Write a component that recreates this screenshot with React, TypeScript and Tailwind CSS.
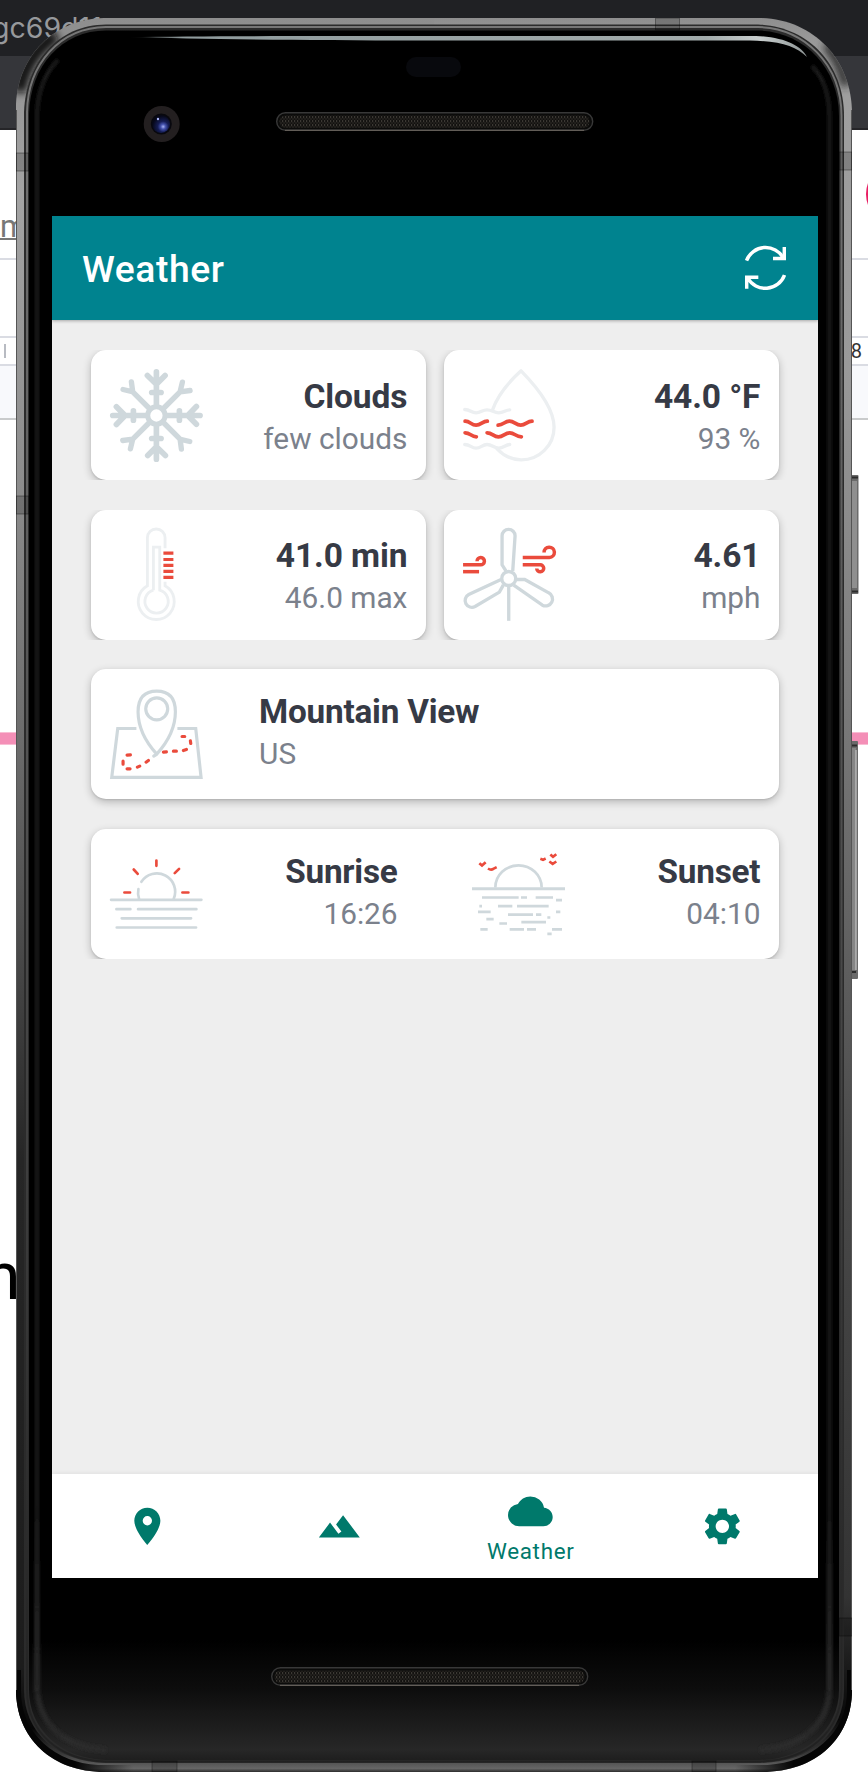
import type { ReactNode } from 'react';
import { MdCloud, MdLocationOn, MdSettings, MdTerrain } from 'react-icons/md';

const MIST = '#cfd8dc';
const PALE = '#eceff1';
const RED = '#ea4b3c';

function Glyph({ box, children }: { box: string; children: ReactNode }) {
  return (
    <svg viewBox={box} className="h-[93px] w-[93px] shrink-0 overflow-visible" fill="none">
      {children}
    </svg>
  );
}

function Snowflake() {
  return (
    <Glyph box="88.8 85.5 279 279">
      <g stroke={MIST} strokeWidth="17" strokeLinecap="round">
        <circle cx="228" cy="225" r="26" strokeWidth="15" />
        {[0, 90, 180, 270].map((a) => (
          <g key={a} transform={`rotate(${a} 228 225)`}>
            <path d="M228 94V195M201 105L228 131L254 105" />
            <path d="M214 156H242" />
            <path d="M207 204L157 154M128 147L157 154L153 124" strokeWidth="16" />
          </g>
        ))}
      </g>
    </Glyph>
  );
}

function Humidity() {
  return (
    <Glyph box="97.8 85.5 279 279">
      <g stroke={PALE} strokeWidth="10" strokeLinecap="round" strokeLinejoin="round">
        <path d="M187 207C203 160 240 120 272 91C320 140 371 205 371 260A98 98 0 0 1 272 358C244 358 222 348 200 325" />
        <path d="M103 207C120 207 122 217 137 217S155 208 170 208S190 217 205 217S225 208 238 208" />
        <path d="M103 312C120 312 122 323 137 323S155 312 170 312S190 323 205 323S225 312 238 312" />
      </g>
      <g stroke={RED} strokeWidth="11" strokeLinecap="round">
        <path d="M104 242C120 242 122 254 137 254S156 242 171 242" />
        <path d="M203 254C220 254 222 242 237 242S256 254 271 254S290 242 305 242" />
        <path d="M104 277C120 277 122 289 138 289" />
        <path d="M170 277C186 277 189 289 204 289S223 277 238 277S256 289 273 289" />
      </g>
    </Glyph>
  );
}

function Thermometer() {
  return (
    <Glyph box="88.8 564.5 279 279">
      <g stroke={PALE} strokeWidth="8.5">
        <path d="M254 625V594A26.5 26.5 0 0 0 201 594V738A54 54 0 1 0 254 738V726" />
        <path d="M219 751V622H238V751A35 35 0 1 1 219 751" />
      </g>
      <path d="M249 640H279M249 659H279M249 676.500H279M249 694.500H279M249 712.500H279" stroke={RED} strokeWidth="9.500" />
    </Glyph>
  );
}

function Turbine() {
  return (
    <Glyph box="97.8 564.5 279 279">
      <g stroke={MIST} strokeWidth="10">
        <circle cx="235" cy="716" r="21" />
        <path d="M235 738V843" />
        <path d="M227 694L215 675V588A19.500 19.500 0 0 1 254 588L247 694" />
        <path d="M212 719L115 764A20 20 0 0 0 134 800L207 757L219 735" />
        <path d="M258 719H283L355 759A20 20 0 0 1 336 796L250 736" />
      </g>
      <g stroke={RED} strokeWidth="10.500">
        <path d="M277 653H357A15.500 15.500 0 1 0 341 638" />
        <path d="M277 675H329A10.500 10.500 0 1 1 319 686" />
        <path d="M98 675H150A11 11 0 1 0 140 664" />
        <path d="M98 695.500H146" />
      </g>
    </Glyph>
  );
}

function MapPin() {
  return (
    <Glyph box="88.8 113.500 279 279">
      <g stroke={MIST} strokeWidth="9.500">
        <path d="M168 235H112L94 381.500H362L346 235H291" />
        <path d="M229 312C200 280 173 235 173 185Q173 123 229 123Q285 123 285 185C285 235 258 280 229 312L220 318" strokeLinecap="round" />
        <circle cx="229" cy="176" r="33" />
      </g>
      <path
        d="M140 315L150 314M128 342L128 333M140 356H149M171 351L178 348M197 336L204 331M249 306L258 305M279 303H288M309 301L318 298M331 280L330 272M305 259H313"
        stroke={RED}
        strokeWidth="9.500"
        strokeLinecap="round"
      />
    </Glyph>
  );
}

function Sunrise() {
  return (
    <Glyph box="88.8 593.500 279 279">
      <g stroke={MIST} strokeWidth="8" strokeLinecap="round">
        <path d="M92 749H363M108 777H150M173 777H348M124 804.500H332M109 832H347" />
        <path d="M183 695A55 55 0 0 1 280 746M174 717Q171 731 176 746" />
      </g>
      <path d="M228 631V647M160 658L172 671M296 656L283 669M132 727H149M306 727H324" stroke={RED} strokeWidth="8" strokeLinecap="round" />
    </Glyph>
  );
}

function Sunset() {
  return (
    <Glyph box="126 593.500 279 279">
      <g stroke={MIST} strokeWidth="8">
        <path d="M126 715.500H405" strokeWidth="9" />
        <path d="M196 712A69 66 0 0 1 335 712" />
        <path d="M156 742H266M273 742H291M317 742H369M378 750H396M148 768H156M204 768H247M261 768H356M144 785H182M378 785H391M234 793.500H309M318 793.500H334M352 802H361M169 807H191M274 816H348M208 820H231M151 837.500H173M239 837.500H282M291 837.500H318M366 837.500H396M352 851H365" />
      </g>
      <path
        d="M148 639L156 646L167 636M174 655Q183 661 190 656L200 651M331 626L339 629L347 625M361 613L369 620L379 612M358 634L368 641L379 634"
        stroke={RED}
        strokeWidth="8"
      />
    </Glyph>
  );
}

function Refresh() {
  return (
    <svg viewBox="315 195 123 137" className="h-[45.67px] w-[41px]" fill="none" stroke="#fff" strokeWidth="10.500">
      <path d="M319.500 242A61 61 0 0 1 430 234M399 235.500H433V201" />
      <path d="M433.500 285A61 61 0 0 1 323 294M320 326V291.500H355" />
    </svg>
  );
}

function Labels({ title, note, wide }: { title: string; note: string; wide?: boolean }) {
  return (
    <div className={wide ? '-mt-[2px]' : 'mt-[5px] text-right'}>
      <p className="text-[33.5px] leading-[42px] font-bold tracking-[-0.1px] text-[#363a45]">{title}</p>
      <p className="text-[29.8px] leading-[42px] text-[#7b818c]">{note}</p>
    </div>
  );
}

function WideLabels({ title, note, align }: { title: string; note: string; align: 'text-left' | 'text-right' }) {
  return (
    <div className={`${align} -mt-[2px]`}>
      <p className="text-[33.3px] leading-[42px] font-bold tracking-[-0.22px] text-[#363a45]">{title}</p>
      <p className="text-[29.8px] leading-[42px] text-[#7b818c]">{note}</p>
    </div>
  );
}

const card =
  'flex h-[130px] items-center rounded-[15px] bg-white px-[18.6px] shadow-[0_3px_9px_rgba(0,0,0,0.24),0_1px_2px_rgba(0,0,0,0.1)]';

function Tile({ icon, title, note }: { icon: ReactNode; title: string; note: string }) {
  return (
    <div className="flex-1 overflow-hidden px-[9px]">
      <div className={`${card} justify-between`}>
        {icon}
        <Labels title={title} note={note} />
      </div>
    </div>
  );
}

function Screen() {
  return (
    <div className="flex h-[1362px] w-[766px] flex-col bg-[#eeeeee]">
      <header className="z-10 flex h-[104px] items-center justify-between bg-[#00838f] pr-[32px] pl-[30px] shadow-[0_1px_3px_rgba(0,0,0,0.3)]">
        <h1 className="pt-[4px] text-[37.3px] leading-none font-medium tracking-[0.55px] text-white">Weather</h1>
        <Refresh />
      </header>
      <main className="flex flex-1 flex-col gap-[29.7px] px-[30px] pt-[30px]">
        <div className="flex">
          <Tile icon={<Snowflake />} title="Clouds" note="few clouds" />
          <Tile icon={<Humidity />} title="44.0 °F" note="93 %" />
        </div>
        <div className="flex">
          <Tile icon={<Thermometer />} title="41.0 min" note="46.0 max" />
          <Tile icon={<Turbine />} title="4.61" note="mph" />
        </div>
        <div className="-my-5 overflow-hidden px-[9px] py-5">
          <div className={`${card} gap-[56.5px]`}>
            <MapPin />
            <WideLabels title="Mountain View" note="US" align="text-left" />
          </div>
        </div>
        <div className="-mt-5 overflow-hidden px-[9px] pt-5">
          <div className={`${card} justify-between`}>
            <div className="flex w-[288px] items-center justify-between">
              <Sunrise />
              <WideLabels title="Sunrise" note="16:26" align="text-right" />
            </div>
            <div className="flex w-[288px] items-center justify-between">
              <Sunset />
              <WideLabels title="Sunset" note="04:10" align="text-right" />
            </div>
          </div>
        </div>
      </main>
      <nav className="grid h-[104px] grid-cols-4 bg-white text-[#00796b] shadow-[0_-1px_4px_rgba(0,0,0,0.06)]">
        <div className="flex items-center justify-center">
          <MdLocationOn size={44.7} />
        </div>
        <div className="flex items-center justify-center">
          <MdTerrain size={44.7} />
        </div>
        <div className="flex flex-col items-center pt-[14.500px]">
          <MdCloud size={44.7} />
          <span className="mt-[5px] text-[22.4px] leading-[26px] tracking-[0.7px]">Weather</span>
        </div>
        <div className="flex items-center justify-center">
          <MdSettings size={44.7} />
        </div>
      </nav>
    </div>
  );
}

function Speaker({ x, y }: { x: number; y: number }) {
  return (
    <g>
      <rect x={x + 0.7} y={y + 0.7} width="316" height="17.600" rx="8.800" fill="#0b0b0a" stroke="#383838" strokeWidth="1.400" />
      <path d={`M${x + 9} ${y + 18.4}H${x + 308}`} stroke="#625d57" strokeWidth="1.200" />
      <rect x={x + 3.5} y={y + 3.5} width="310" height="12.500" rx="6" fill="url(#mesh)" />
    </g>
  );
}

function Device() {
  return (
    <svg width="868" height="1784" viewBox="0 0 868 1784" className="block" fill="none">
      <defs>
        <linearGradient id="rimL" x1="0" y1="18" x2="0" y2="1772" gradientUnits="userSpaceOnUse">
          <stop offset="0" stopColor="#8e8e8e" />
          <stop offset="0.1" stopColor="#a4a4a4" />
          <stop offset="0.27" stopColor="#8c8c8c" />
          <stop offset="0.42" stopColor="#6a6a6a" />
          <stop offset="0.65" stopColor="#262626" />
          <stop offset="0.94" stopColor="#1c1c1c" />
          <stop offset="0.975" stopColor="#060606" />
          <stop offset="0.99" stopColor="#3a3a3a" />
          <stop offset="0.998" stopColor="#666" />
          <stop offset="1" stopColor="#2c2c2c" />
        </linearGradient>
        <linearGradient id="rimR" x1="0" y1="18" x2="0" y2="1772" gradientUnits="userSpaceOnUse">
          <stop offset="0" stopColor="#8e8e8e" />
          <stop offset="0.02" stopColor="#a0a0a0" />
          <stop offset="0.2" stopColor="#999" />
          <stop offset="0.42" stopColor="#757575" />
          <stop offset="0.65" stopColor="#4a4a4a" />
          <stop offset="0.9" stopColor="#333" />
          <stop offset="0.97" stopColor="#080808" />
          <stop offset="0.99" stopColor="#3a3a3a" />
          <stop offset="0.998" stopColor="#666" />
          <stop offset="1" stopColor="#2c2c2c" />
        </linearGradient>
        <linearGradient id="innerRim" x1="0" y1="18" x2="0" y2="1772" gradientUnits="userSpaceOnUse">
          <stop offset="0" stopColor="#777" />
          <stop offset="0.5" stopColor="#4c4c4c" />
          <stop offset="1" stopColor="#202020" />
        </linearGradient>
        <linearGradient id="cornerShade" x1="16" y1="0" x2="852" y2="0" gradientUnits="userSpaceOnUse">
          <stop offset="0" stopColor="#050505" />
          <stop offset="0.07" stopColor="#050505" />
          <stop offset="0.14" stopColor="#050505" stopOpacity="0" />
          <stop offset="0.86" stopColor="#050505" stopOpacity="0" />
          <stop offset="0.93" stopColor="#050505" />
          <stop offset="1" stopColor="#050505" />
        </linearGradient>
        <linearGradient id="edgeSheen" x1="0" y1="1500" x2="0" y2="1750" gradientUnits="userSpaceOnUse">
          <stop offset="0" stopColor="#2a2a2a" stopOpacity="0" />
          <stop offset="1" stopColor="#2a2a2a" />
        </linearGradient>
        <linearGradient id="glass" x1="0" y1="1640" x2="0" y2="1762" gradientUnits="userSpaceOnUse">
          <stop offset="0" stopColor="#000" />
          <stop offset="0.4" stopColor="#0d0d0d" />
          <stop offset="0.9" stopColor="#272727" />
          <stop offset="1" stopColor="#1d1d1d" />
        </linearGradient>
        <linearGradient id="glare" x1="128" y1="0" x2="808" y2="0" gradientUnits="userSpaceOnUse">
          <stop offset="0" stopColor="#9aa5a6" stopOpacity="0" />
          <stop offset="0.08" stopColor="#8f9b9d" />
          <stop offset="0.85" stopColor="#a2abab" />
          <stop offset="0.93" stopColor="#c9cfcf" />
          <stop offset="1" stopColor="#8c9393" />
        </linearGradient>
        <radialGradient id="lens" cx="0.62" cy="0.65" r="0.6">
          <stop offset="0" stopColor="#a9b4f4" />
          <stop offset="0.22" stopColor="#4654b0" />
          <stop offset="0.5" stopColor="#151d55" />
          <stop offset="1" stopColor="#060818" />
        </radialGradient>
        <pattern id="mesh" width="3" height="4" patternUnits="userSpaceOnUse">
          <rect width="3" height="4" fill="#12110f" />
          <rect width="1.200" height="2.200" fill="#3b3833" />
          <rect x="1.500" y="2" width="1" height="2" fill="#2e2b27" />
        </pattern>
        <filter id="soft" x="0" y="0" width="868" height="200" filterUnits="userSpaceOnUse">
          <feGaussianBlur stdDeviation="4" />
        </filter>
        <filter id="softer" x="0" y="0" width="868" height="1784" filterUnits="userSpaceOnUse">
          <feGaussianBlur stdDeviation="1.800" />
        </filter>
        <clipPath id="shell">
          <path d="M104 18H760C812 19 852 58 852 114V1690C852 1738 816 1772 762 1772H104C52 1772 16 1738 16 1690V104C18 56 54 19 104 18Z" />
        </clipPath>
      </defs>

      <rect x="850" y="475" width="8.500" height="119" rx="1" fill="#6a6a6a" />
      <rect x="852" y="481" width="5" height="107" fill="#8f8f8f" />
      <path d="M850 477.500H858M850 591.500H858" stroke="#2c2c2c" strokeWidth="2" />
      <rect x="850" y="741" width="8" height="238" rx="1" fill="#6a6a6a" />
      <rect x="851" y="748" width="5" height="222" fill="#858585" />
      <path d="M850 745.500H857M850 972H856" stroke="#2c2c2c" strokeWidth="2" />
      <path d="M856 750V970" stroke="#c4c4c4" strokeWidth="1.200" />

      <g clipPath="url(#shell)">
        <rect x="16" y="18" width="419" height="1754" fill="url(#rimL)" />
        <rect x="434" y="18" width="418" height="1754" fill="url(#rimR)" />
        <path d="M17 1670V1690C17 1738 54 1766 98 1769H140M851 1670V1690C851 1738 812 1766 768 1769H730" stroke="url(#cornerShade)" strokeWidth="8" />
        <path d="M19 92C23 68 34 50 56 35" stroke="#0a0a0a" strokeWidth="14" filter="url(#soft)" />
        <path d="M846 86C842 66 835 56 826 44" stroke="#2a2a2a" strokeWidth="10" filter="url(#soft)" />
        <path d="M16.500 110V1690M851.500 110V1690" stroke="#555" />
        <path d="M24 1690V112C26 62 58 25 106 24.500H758C806 26 844 62 844 116V1690C844 1732 812 1762 760 1763H106C56 1762 24 1732 24 1690Z" fill="#2b2b2b" />
        <path d="M27 1690V112C28 64 60 27.500 106 27H758C804 28 841.500 64 841.500 116V1690C841 1732 808 1760 760 1761.500H106C58 1760 27 1732 27 1690Z" stroke="url(#innerRim)" strokeWidth="2" />
        <path d="M29 1690V114C30 66 62 30.500 106 30.500H758C802 31 839 66 839 116V1690C839 1730 804 1759.500 760 1760H106C62 1759 29 1730 29 1690Z" fill="url(#glass)" />
        <path d="M37 1690V114C38 88 46 72 58 60M829.500 1690V116C829 90 822 76 812 66" stroke="#1a1a1a" strokeWidth="4" filter="url(#softer)" />
        <path d="M37 1500V1690C40 1722 60 1746 106 1750M829.500 1500V1690C828 1722 806 1746 760 1750" stroke="url(#edgeSheen)" strokeWidth="6" filter="url(#softer)" />
        <g fill="#000" fillOpacity="0.18" stroke="#000" strokeOpacity="0.35">
          <rect x="16" y="153" width="13" height="18" />
          <rect x="16" y="496" width="13" height="18" />
          <rect x="839" y="152" width="13" height="18" />
          <rect x="839" y="1618" width="13" height="18" />
          <rect x="655.500" y="18" width="24" height="12" />
          <rect x="152" y="1761" width="25" height="11" />
          <rect x="692" y="1761" width="24" height="11" />
        </g>
      </g>

      <path d="M128 37C200 36 300 36 420 36H756C784 37 802 46 807 57C796 46 780 41 750 40.500H420C300 40.500 200 39 128 37Z" fill="url(#glare)" />
      <rect x="406" y="57" width="55" height="20" rx="10" fill="#08090d" />
      <circle cx="161.700" cy="124" r="18" fill="#231f20" />
      <circle cx="161.300" cy="124" r="10.500" fill="#08080e" />
      <circle cx="161" cy="124" r="9" fill="url(#lens)" />
      <circle cx="158" cy="119" r="1.200" fill="#a9b4f4" />
      <Speaker x={276} y={112} />
      <Speaker x={271} y={1667} />
    </svg>
  );
}

function Backdrop() {
  return (
    <div className="flex h-full flex-col bg-white">
      <div className="h-[56px] overflow-hidden bg-[#202124]">
        <p className="-ml-[8px] pt-[12px] font-['Inter'] text-[28.5px] leading-[32px] whitespace-nowrap text-[#97999c]">gc69d11</p>
      </div>
      <div className="h-[74px] border-b-2 border-[#252528] bg-[#35363a]" />
      <div className="flex h-[130px] items-end justify-between border-b-2 border-[#dadce3]">
        <span className="mb-[18px] h-[36px] w-[30px] border-b-2 border-[#777] text-[31px] leading-[46px] text-[#777]">m</span>
        <span className="mb-[33px] -mr-[60px] size-[62px] shrink-0 rounded-full bg-[#e91e63]" />
      </div>
      <div className="h-[78px] border-b-2 border-[#dadce3]" />
      <div className="flex h-[28px] items-center justify-between border-b-2 border-[#dadce3] pl-[4px]">
        <span className="h-[14px] w-[2px] bg-[#b8bbc2]" />
        <span className="mr-[6px] text-[20px] leading-none text-[#333]">8</span>
      </div>
      <div className="h-[54px] border-b-2 border-[#c9cbcc] bg-[#f8f9fc]" />
      <div className="mt-[312px] h-[13px] border-y border-[#f9bdd3] bg-[#f48fb7]" />
      <p className="mt-[493px] -ml-[16px] text-[66px] leading-[77px] text-black">n</p>
    </div>
  );
}

export default function App() {
  return (
    <div className="relative h-[1784px] w-[868px] overflow-hidden font-['Roboto',sans-serif]">
      <Backdrop />
      <div className="absolute inset-0">
        <Device />
      </div>
      <div className="absolute top-[216px] left-[52px]">
        <Screen />
      </div>
    </div>
  );
}
